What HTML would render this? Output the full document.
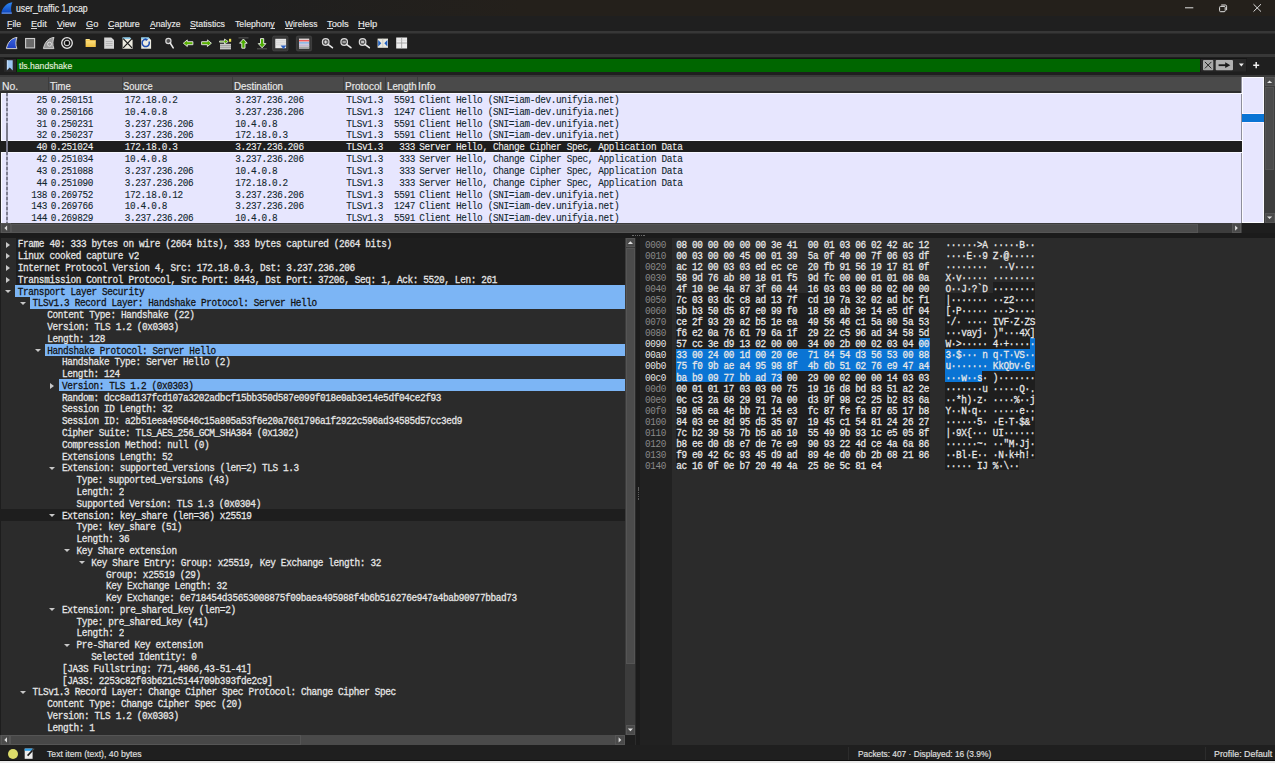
<!DOCTYPE html><html><head><meta charset="utf-8"><style>*{margin:0;padding:0;box-sizing:border-box}
html,body{width:1275px;height:763px;overflow:hidden;background:#2b2b2b}
body{position:relative;font-family:"Liberation Sans",sans-serif;}
div,span{position:absolute}
.sans{font-family:"Liberation Sans",sans-serif;font-size:9.3px;color:#e8e8e8;white-space:pre;line-height:12px}
.mono{font-family:"Liberation Mono",monospace}
#title{left:0;top:0;width:1275px;height:16.3px;background:#25211d}
#menu{left:0;top:16.3px;width:1275px;height:15.2px;background:#202020}
#sep1{left:0;top:31.5px;width:1275px;height:2px;background:#383838}
#toolbar{left:0;top:33.5px;width:1275px;height:20.5px;background:#202020}
#sep2{left:0;top:54px;width:1275px;height:2.5px;background:#393939}
#fbar{left:0;top:56.5px;width:1275px;height:18px;background:#202020}
#sep3{left:0;top:74.5px;width:1275px;height:2px;background:#3c3c3c}
#plhdr{left:0;top:76.6px;width:1241.5px;height:16px;background:#4a4a4a}
#plbody{left:0;top:92.6px;width:1241.5px;height:130.4px;background:#e7e6fe}
.prow{-webkit-text-stroke:0.1px currentColor;left:0;width:1241.5px;font-family:"Liberation Mono",monospace;font-size:9.4px;letter-spacing:-0.36px;color:#12272e;white-space:pre}
.prow .c{top:0;line-height:11.82px;transform:scaleY(1.12);transform-origin:0 8.2px}
.prow.sel{background:#1e1e1e;color:#f0f0f0}
.tbg{left:0;width:625px}
.tbg.top{background:#1e1e1e;left:15.5px;width:609.5px}
.tbg.dk{background:#1e1e1e}
.tbg.hl{background:#7cb5f5}
.tt{color:#e2e2e2;transform:scaleY(1.12);transform-origin:0 8.4px;-webkit-text-stroke:0.25px currentColor;font-family:"Liberation Mono",monospace;font-size:9.4px;letter-spacing:-0.36px;color:#e6e6e6;white-space:pre;line-height:11.79px}
.tt.hlt{color:#111}
.arr{width:0;height:0}
.ac{border-left:4px solid #c8c8c8;border-top:3px solid transparent;border-bottom:3px solid transparent}
.ao{border-top:3.6px solid #c8c8c8;border-left:3.2px solid transparent;border-right:3.2px solid transparent}
.hbg.tls{background:#1e1e1e}
.hbg.hsel{background:#0a74d4}
.ho{transform:scaleY(1.12);transform-origin:0 8.1px;font-family:"Liberation Mono",monospace;font-size:9.4px;letter-spacing:-0.36px;color:#8a8a8a;white-space:pre;line-height:11.07px}
.ht{transform:scaleY(1.12);transform-origin:0 8.1px;-webkit-text-stroke:0.25px currentColor;font-family:"Liberation Mono",monospace;font-size:9.4px;letter-spacing:-0.36px;color:#e8e8e8;white-space:pre;line-height:11.07px}
.lb{-webkit-text-stroke:0.15px currentColor;font-family:"Liberation Sans",sans-serif;line-height:1;white-space:pre;transform-origin:0 0}
</style></head><body><div style="left:0;top:0;width:1275px;height:16.3px;background:linear-gradient(90deg,#1f1f1f 0px,#1f1f1f 250px,#24201b 520px,#24201b 1275px)"></div><div class="lb" style="left:15.64px;top:3.57px;font-size:10.2px;color:#ececec;transform:scaleX(0.8567);">user_traffic 1.pcap</div><div style="left:0;top:16.3px;width:1275px;height:15.2px;background:#1f1f1f"></div><div class="lb" style="left:6.78px;top:19.93px;font-size:9.3px;color:#e8e8e8;transform:scaleX(0.9479);">File</div><div style="left:7.08px;top:28.3px;width:5.08px;height:0.9px;background:#d8d8d8"></div><div class="lb" style="left:30.55px;top:19.93px;font-size:9.3px;color:#e8e8e8;transform:scaleX(0.9805);">Edit</div><div style="left:30.85px;top:28.3px;width:5.78px;height:0.9px;background:#d8d8d8"></div><div class="lb" style="left:56.96px;top:19.93px;font-size:9.3px;color:#e8e8e8;transform:scaleX(0.9511);">View</div><div style="left:57.26px;top:28.3px;width:5.60px;height:0.9px;background:#d8d8d8"></div><div class="lb" style="left:85.94px;top:19.93px;font-size:9.3px;color:#e8e8e8;transform:scaleX(0.9956);">Go</div><div style="left:86.24px;top:28.3px;width:6.90px;height:0.9px;background:#d8d8d8"></div><div class="lb" style="left:107.85px;top:19.93px;font-size:9.3px;color:#e8e8e8;transform:scaleX(0.9623);">Capture</div><div style="left:108.15px;top:28.3px;width:6.16px;height:0.9px;background:#d8d8d8"></div><div class="lb" style="left:149.78px;top:19.93px;font-size:9.3px;color:#e8e8e8;transform:scaleX(0.9216);">Analyze</div><div style="left:150.08px;top:28.3px;width:5.42px;height:0.9px;background:#d8d8d8"></div><div class="lb" style="left:189.80px;top:19.93px;font-size:9.3px;color:#e8e8e8;transform:scaleX(0.9409);">Statistics</div><div style="left:190.10px;top:28.3px;width:5.54px;height:0.9px;background:#d8d8d8"></div><div class="lb" style="left:235.01px;top:19.93px;font-size:9.3px;color:#e8e8e8;transform:scaleX(0.9364);">Telephony</div><div style="left:270.66px;top:28.3px;width:4.05px;height:0.9px;background:#d8d8d8"></div><div class="lb" style="left:284.87px;top:19.93px;font-size:9.3px;color:#e8e8e8;transform:scaleX(0.9098);">Wireless</div><div style="left:285.17px;top:28.3px;width:7.69px;height:0.9px;background:#d8d8d8"></div><div class="lb" style="left:326.90px;top:19.93px;font-size:9.3px;color:#e8e8e8;transform:scaleX(1.0016);">Tools</div><div style="left:327.20px;top:28.3px;width:5.39px;height:0.9px;background:#d8d8d8"></div><div class="lb" style="left:357.93px;top:19.93px;font-size:9.3px;color:#e8e8e8;transform:scaleX(1.0074);">Help</div><div style="left:358.23px;top:28.3px;width:6.47px;height:0.9px;background:#d8d8d8"></div><div style="left:0;top:31.3px;width:1275px;height:2.2px;background:#373737"></div><div style="left:0;top:33.5px;width:1275px;height:20.5px;background:#1f1f1f"></div><div style="left:0;top:54px;width:1275px;height:2.5px;background:#383838"></div><div style="left:0;top:56.5px;width:1275px;height:18.5px;background:#1f1f1f"></div><div style="left:3.5px;top:58.1px;width:1243.5px;height:14.2px;background:#141414;border-radius:1px"></div><div style="left:4.4px;top:58.8px;width:11.6px;height:13px;background:#282828"></div><div style="left:16.9px;top:58.8px;width:1183.3px;height:13.2px;background:#006600"></div><div class="lb" style="left:19.16px;top:62.03px;font-size:9.3px;color:#e2eedf;transform:scaleX(0.9274);">tls.handshake</div><div style="left:0;top:74.6px;width:1275px;height:2px;background:#3a3a3a"></div><div style="left:0;top:76.6px;width:1241.5px;height:15.2px;background:#4a4a4a"></div><div style="left:0;top:91.3px;width:1241.5px;height:1.5px;background:#2e2e2e"></div><div style="left:47.7px;top:77px;width:1px;height:14.5px;background:#3c3c3c"></div><div style="left:121.5px;top:77px;width:1px;height:14.5px;background:#3c3c3c"></div><div style="left:231.5px;top:77px;width:1px;height:14.5px;background:#3c3c3c"></div><div style="left:342.6px;top:77px;width:1px;height:14.5px;background:#3c3c3c"></div><div style="left:384.6px;top:77px;width:1px;height:14.5px;background:#3c3c3c"></div><div style="left:417.2px;top:77px;width:1px;height:14.5px;background:#3c3c3c"></div><div class="lb" style="left:1.65px;top:81.31px;font-size:10.5px;color:#eaeaea;transform:scaleX(0.9924);">No.</div><div class="lb" style="left:49.99px;top:81.31px;font-size:10.5px;color:#eaeaea;transform:scaleX(0.9038);">Time</div><div class="lb" style="left:123.17px;top:81.31px;font-size:10.5px;color:#eaeaea;transform:scaleX(0.8911);">Source</div><div class="lb" style="left:233.90px;top:81.31px;font-size:10.5px;color:#eaeaea;transform:scaleX(0.9336);">Destination</div><div class="lb" style="left:344.88px;top:81.31px;font-size:10.5px;color:#eaeaea;transform:scaleX(0.9524);">Protocol</div><div class="lb" style="left:387.01px;top:81.31px;font-size:10.5px;color:#eaeaea;transform:scaleX(0.9223);">Length</div><div class="lb" style="left:418.13px;top:81.31px;font-size:10.5px;color:#eaeaea;transform:scaleX(0.9996);">Info</div><div style="left:0;top:745px;width:1275px;height:15px;background:#1f1f1f"></div><div style="left:0;top:760px;width:1275px;height:1.4px;background:#0c0c0c"></div><div style="left:0;top:761.4px;width:1275px;height:1.6px;background:#ebebeb"></div><div class="lb" style="left:46.81px;top:750.33px;font-size:9.3px;color:#e0e0e0;transform:scaleX(0.9349);">Text item (text), 40 bytes</div><div class="lb" style="left:857.92px;top:750.33px;font-size:9.3px;color:#e0e0e0;transform:scaleX(0.8979);">Packets: 407 · Displayed: 16 (3.9%)</div><div class="lb" style="left:1213.97px;top:750.33px;font-size:9.3px;color:#e0e0e0;transform:scaleX(0.9542);">Profile: Default</div><div style="left:848px;top:747px;width:1px;height:13px;background:#2c2c2c"></div><div style="left:1204.5px;top:747px;width:1px;height:13px;background:#2c2c2c"></div><div style="left:7.5px;top:748.8px;width:10.1px;height:10px;border-radius:50%;background:#dcdc6a"></div><svg style="position:absolute;left:0;top:740px" width="60" height="23"><rect x="24.7" y="8.6" width="7.9" height="10.2" fill="#ececec"/><rect x="24.7" y="8.6" width="7.9" height="2.2" fill="#2c9ee8"/><path d="M27.6 15.6 L33.6 9.3" stroke="#1a1a1a" stroke-width="1.6"/><path d="M32.2 10.6 L34.2 8.6" stroke="#555" stroke-width="1.2"/></svg><svg style="position:absolute;left:0;top:0" width="1275" height="80"><defs><linearGradient id="gfin" x1="0" y1="0" x2="0" y2="1"><stop offset="0" stop-color="#3a64e0"/><stop offset="1" stop-color="#1f3fc0"/></linearGradient><linearGradient id="gfold" x1="0" y1="0" x2="0" y2="1"><stop offset="0" stop-color="#ffe890"/><stop offset="1" stop-color="#f0c040"/></linearGradient><linearGradient id="gtfin" x1="0" y1="0" x2="0" y2="1"><stop offset="0" stop-color="#2f8af5"/><stop offset="1" stop-color="#0a3fb8"/></linearGradient></defs><path d="M1.2 13.7 C2.3 8 5.8 3.2 12.4 2.3 C10.9 5.5 10.6 10 11.9 13.7 Z" fill="url(#gtfin)"/><path d="M1.8 13.1 L11.8 13.1" stroke="#80a8e8" stroke-width="1"/><path d="M1185 7.8 H1193.3" stroke="#e0e0e0" stroke-width="1"/><rect x="1219.6" y="6.4" width="5.6" height="5.3" rx="1" fill="none" stroke="#e0e0e0" stroke-width="1"/><path d="M1221.2 5 H1225.3 Q1226.6 5 1226.6 6.3 V10.2" fill="none" stroke="#e0e0e0" stroke-width="1"/><path d="M1253.5 4.2 L1261 11.6 M1261 4.2 L1253.5 11.6" stroke="#e0e0e0" stroke-width="1"/><path d="M6.4 48.6 C7.8 42 11 38.3 17 37.4 C15.6 40.6 15.4 45 16.9 48.6 Z" fill="url(#gfin)" stroke="#cfcfcf" stroke-width="1"/><rect x="25.6" y="38.5" width="9" height="9.4" fill="#6a6a6a" stroke="#cdcdcd" stroke-width="1.1"/><path d="M43.4 48.6 C44.8 42 48 38.3 54 37.4 C52.6 40.6 52.4 45 53.9 48.6 Z" fill="#9a9a9a" stroke="#cfcfcf" stroke-width="1"/><circle cx="49.5" cy="44.2" r="2" fill="none" stroke="#e0e0e0" stroke-width="0.9"/><circle cx="67" cy="43" r="5.3" fill="none" stroke="#e6e6e6" stroke-width="1.3"/><circle cx="67" cy="43" r="2.8" fill="#222" stroke="#e0e0e0" stroke-width="1"/><circle cx="67" cy="43" r="1.1" fill="#000"/><path d="M85.6 39 H89.4 L90.4 40.2 H95.8 V47 H85.6 Z" fill="url(#gfold)"/><path d="M85.6 40.6 H95.8" stroke="#f5b830" stroke-width="0.6"/><path d="M104.2 37.4 H111.3 L114 40.1 V48.7 H104.2 Z" fill="#d6d6d6"/><path d="M105.8 41.5 H112.5 M105.8 43.5 H112.5 M105.8 45.5 H112.5" stroke="#a8a8a8" stroke-width="0.7"/><path d="M122.6 37.4 H130 L132.6 40 V48.7 H122.6 Z" fill="#ecebe0"/><path d="M122.6 37.4 H130 L131.3 38.8 H122.6 Z" fill="#6cc0f0"/><path d="M123.2 38.6 L132 47.8 M132 38.6 L123.2 47.8" stroke="#1a1a1a" stroke-width="1.2"/><path d="M141.2 37.4 H148.6 L151.1 40 V48.7 H141.2 Z" fill="#ecebe0"/><path d="M141.2 37.4 H148.6 L149.8 38.8 H141.2 Z" fill="#6cc0f0"/><path d="M149 41.5 A3.6 3.6 0 1 1 146.2 39.4" fill="none" stroke="#1f4fb0" stroke-width="1.5"/><path d="M145.4 38.2 L148.2 39.5 L145.8 41.3 Z" fill="#1f4fb0"/><circle cx="168.4" cy="41" r="2.6" fill="#555" stroke="#d8d8d8" stroke-width="1.2"/><path d="M170.2 43 L173.2 47.8" stroke="#e8e8e8" stroke-width="1.6" stroke-linecap="round"/><path d="M183.3 43.2 L187.3 39.9 V41.7 H192.9 V44.7 H187.3 V46.5 Z" fill="#58b000" stroke="#e8e8e8" stroke-width="0.9" stroke-linejoin="round"/><path d="M211.4 43.2 L207.4 39.9 V41.7 H201.6 V44.7 H207.4 V46.5 Z" fill="#58b000" stroke="#e8e8e8" stroke-width="0.9" stroke-linejoin="round"/><rect x="220" y="43.8" width="11" height="5.6" fill="#c8c8c8"/><path d="M220 45.5 H231 M220 47.4 H231" stroke="#8a8a8a" stroke-width="0.6"/><rect x="229" y="38.8" width="2.2" height="3" fill="#e8e050"/><path d="M219.6 41 H224.5 V39 L228.2 41.5 L224.5 44 V42.2 H219.6 Z" fill="#58b000" stroke="#e8e8e8" stroke-width="0.8" stroke-linejoin="round"/><path d="M238.5 37.9 H248.5" stroke="#6a6a6a" stroke-width="0.8"/><path d="M243.4 39 L247.2 43.2 H245 V48.2 H241.8 V43.2 H239.6 Z" fill="#4cad00" stroke="#f0f0f0" stroke-width="0.9" stroke-linejoin="round"/><path d="M257 48.8 H267" stroke="#6a6a6a" stroke-width="0.8"/><path d="M262.1 47.8 L265.9 43.6 H263.7 V38.6 H260.5 V43.6 H258.3 Z" fill="#4cad00" stroke="#f0f0f0" stroke-width="0.9" stroke-linejoin="round"/><rect x="272.6" y="36.1" width="15.4" height="14.8" rx="1.5" fill="#363636" stroke="#454545" stroke-width="0.8"/><rect x="275.3" y="38.8" width="10.8" height="9.4" fill="#e8e8e8"/><path d="M275.3 40.8 H286.1 M275.3 42.8 H286.1 M275.3 44.8 H286.1" stroke="#c4c4c4" stroke-width="0.6"/><path d="M280.6 45.4 H286.4 L283.5 49 Z" fill="#2a5fc0"/><rect x="296.4" y="36.1" width="15.2" height="14.8" rx="1.5" fill="#363636" stroke="#454545" stroke-width="0.8"/><rect x="299" y="38.6" width="10.2" height="10" fill="#e0e0e0"/><rect x="299" y="39.9" width="10.2" height="1.5" fill="#f05a5a"/><rect x="299" y="42.2" width="10.2" height="1.4" fill="#7eb0e8"/><rect x="299" y="44.4" width="10.2" height="1.8" fill="#c4b8d4"/><rect x="299" y="46.6" width="10.2" height="2" fill="#a8a8a8"/><circle cx="325.7" cy="42.0" r="3.3" fill="#505050" stroke="#d8d8d8" stroke-width="1.2"/><path d="M328.0 44.4 L332.40000000000003 47.7" stroke="#e8e8e8" stroke-width="1.6" stroke-linecap="round"/><path d="M324.09999999999997 42.0 H327.3 M325.7 40.4 V43.6" stroke="#f0f0f0" stroke-width="0.9"/><circle cx="344.2" cy="42.0" r="3.3" fill="#505050" stroke="#d8d8d8" stroke-width="1.2"/><path d="M346.5 44.4 L350.90000000000003 47.7" stroke="#e8e8e8" stroke-width="1.6" stroke-linecap="round"/><path d="M342.59999999999997 42.0 H345.8" stroke="#f0f0f0" stroke-width="1"/><circle cx="362.59999999999997" cy="42.0" r="3.3" fill="#505050" stroke="#d8d8d8" stroke-width="1.2"/><path d="M364.9 44.4 L369.3 47.7" stroke="#e8e8e8" stroke-width="1.6" stroke-linecap="round"/><rect x="361.09999999999997" y="40.8" width="3" height="2.4" fill="#c0c0c0"/><rect x="377.6" y="38.6" width="10.4" height="9.2" fill="#e8e8e0"/><path d="M382.8 38.6 V47.8" stroke="#b8b8b0" stroke-width="0.6"/><path d="M378.2 40 L381.3 43.2 L378.2 46.4 Z M387.4 40 L384.3 43.2 L387.4 46.4 Z" fill="#2060c0"/><rect x="396.2" y="37.5" width="10.9" height="11" fill="#ececec"/><path d="M396.2 43 H407.1 M401.65 37.5 V48.5" stroke="#9a9a9a" stroke-width="0.8"/><path d="M396.2 40.2 H407.1" stroke="#c8c8c8" stroke-width="0.5"/><path d="M6.8 60.2 H12.7 V70.5 L9.75 67.6 L6.8 70.5 Z" fill="#9cc6f2"/><path d="M7.6 60.2 V69" stroke="#cfe4fa" stroke-width="0.8"/><rect x="1200.6" y="58.9" width="45.8" height="12.9" fill="#292929"/><rect x="1203" y="60" width="10.3" height="10.3" rx="1" fill="#a9a9a9"/><path d="M1204.9 61.9 L1211.4 68.4 M1211.4 61.9 L1204.9 68.4" stroke="#262626" stroke-width="1"/><rect x="1215.7" y="60" width="17.3" height="10.3" rx="1" fill="#b1b1b1"/><path d="M1218.6 65.2 H1226.5" stroke="#1c1c1c" stroke-width="1.8"/><path d="M1225.2 62.3 L1230.3 65.2 L1225.2 68.1 Z" fill="#1c1c1c"/><path d="M1238.9 63.6 H1243.8 L1241.35 66.5 Z" fill="#f0f0f0"/><path d="M1253.2 65.2 H1259.2 M1256.2 62.1 V68.3" stroke="#f0f0f0" stroke-width="1.5"/></svg><div style="left:0;top:92.6px;width:1241.5px;height:130.4px;background:#e7e6fe"></div><div style="left:0;top:92.6px;width:1px;height:130.4px;background:#2a2a2a"></div><div style="left:1px;top:92.6px;width:1px;height:130.4px;background:#fafaff"></div><div style="left:1241.3px;top:76.8px;width:1px;height:146.2px;background:#8e8e9c"></div><div style="left:1242.3px;top:77.3px;width:21.8px;height:145.7px;background:#fbfbff"></div><div style="left:1243.3px;top:78.3px;width:19.8px;height:143.7px;background:#e7e6fe"></div><div style="left:1242.3px;top:112.8px;width:21.8px;height:10.6px;background:#fdf3ff"></div><div style="left:1242.3px;top:113.7px;width:21.8px;height:8.8px;background:#0a74d4"></div><div style="left:1264.2px;top:76.8px;width:10.8px;height:146.2px;background:#3d3d3d"></div><div style="left:1265px;top:87px;width:9.2px;height:83px;background:#4b4b4b;border:0.8px solid #555"></div><div style="left:1264.60px;top:77.30px;width:10.00px;height:9.00px;background:#4a4a4a;border:0.8px solid #565656"></div><svg style="position:absolute;left:0;top:0;overflow:visible" width="1" height="1"><polygon points="1267.0,83.1 1272.1999999999998,83.1 1269.6,80.39999999999999" fill="#e0e0e0"/></svg><div style="left:1264.60px;top:212.60px;width:10.00px;height:10.20px;background:#4a4a4a;border:0.8px solid #565656"></div><svg style="position:absolute;left:0;top:0;overflow:visible" width="1" height="1"><polygon points="1267.0,216.39999999999998 1272.1999999999998,216.39999999999998 1269.6,219.1" fill="#e0e0e0"/></svg><div style="left:0;top:223px;width:1275px;height:10.2px;background:#1e1e1e"></div><div style="left:0;top:223px;width:1241.5px;height:10px;background:#3c3c3c"></div><div style="left:10.6px;top:223.5px;width:1187.5px;height:9px;background:#4c4c4c;border:0.8px solid #555"></div><div style="left:1.00px;top:223.40px;width:9.60px;height:9.40px;background:#4a4a4a;border:0.8px solid #565656"></div><svg style="position:absolute;left:0;top:0;overflow:visible" width="1" height="1"><polygon points="7.1,225.5 7.1,230.7 4.4,228.1" fill="#e0e0e0"/></svg><div style="left:1231.60px;top:223.40px;width:9.60px;height:9.40px;background:#4a4a4a;border:0.8px solid #565656"></div><svg style="position:absolute;left:0;top:0;overflow:visible" width="1" height="1"><polygon points="1235.1,225.5 1235.1,230.7 1237.8,228.1" fill="#e0e0e0"/></svg><div style="left:0;top:232.6px;width:1241.5px;height:0.8px;background:#333"></div><div style="left:0;top:233.2px;width:1275px;height:4.6px;background:#1b1b1b"></div><div style="left:632.30px;top:235px;width:1.3px;height:1.3px;background:#6a6a6a"></div><div style="left:634.50px;top:235px;width:1.3px;height:1.3px;background:#6a6a6a"></div><div style="left:636.70px;top:235px;width:1.3px;height:1.3px;background:#6a6a6a"></div><div style="left:638.90px;top:235px;width:1.3px;height:1.3px;background:#6a6a6a"></div><div style="left:641.10px;top:235px;width:1.3px;height:1.3px;background:#6a6a6a"></div><div style="left:643.30px;top:235px;width:1.3px;height:1.3px;background:#6a6a6a"></div><div style="left:0;top:237.8px;width:625px;height:497.2px;background:#2b2b2b"></div><div style="left:0;top:237.8px;width:1px;height:497.2px;background:#1d1d1d"></div><div style="left:625.2px;top:237.8px;width:10.3px;height:497.2px;background:#3c3c3c"></div><div style="left:625.6px;top:247.6px;width:9.6px;height:416.4px;background:#4b4b4b;border:0.8px solid #555"></div><div style="left:625.50px;top:238.00px;width:9.80px;height:9.40px;background:#4a4a4a;border:0.8px solid #565656"></div><svg style="position:absolute;left:0;top:0;overflow:visible" width="1" height="1"><polygon points="627.8,244.0 633.0,244.0 630.4,241.29999999999998" fill="#e0e0e0"/></svg><div style="left:625.50px;top:725.20px;width:9.80px;height:9.40px;background:#4a4a4a;border:0.8px solid #565656"></div><svg style="position:absolute;left:0;top:0;overflow:visible" width="1" height="1"><polygon points="627.8,728.6000000000001 633.0,728.6000000000001 630.4,731.3000000000001" fill="#e0e0e0"/></svg><div style="left:0;top:734.8px;width:625.2px;height:10.2px;background:#4a4a4a"></div><div style="left:10px;top:735.2px;width:291px;height:9.4px;background:#474747;border:0.8px solid #555"></div><div style="left:1.00px;top:735.20px;width:9.40px;height:9.40px;background:#4a4a4a;border:0.8px solid #565656"></div><svg style="position:absolute;left:0;top:0;overflow:visible" width="1" height="1"><polygon points="7.0,737.3000000000001 7.0,742.5000000000001 4.300000000000001,739.9000000000001" fill="#e0e0e0"/></svg><div style="left:615.00px;top:735.20px;width:9.80px;height:9.40px;background:#4a4a4a;border:0.8px solid #565656"></div><svg style="position:absolute;left:0;top:0;overflow:visible" width="1" height="1"><polygon points="618.6,737.3000000000001 618.6,742.5000000000001 621.3,739.9000000000001" fill="#e0e0e0"/></svg><div style="left:625.2px;top:734.8px;width:10.3px;height:10.2px;background:#1e1e1e"></div><div style="left:635.5px;top:237.8px;width:4.5px;height:507.2px;background:#1c1c1c"></div><div style="left:640px;top:237.8px;width:635px;height:507.2px;background:#2b2b2b"></div><div style="left:640px;top:237.8px;width:31.5px;height:507.2px;background:#212121"></div><div style="left:637.6px;top:487.20px;width:1.4px;height:1.4px;background:#5e5e5e"></div><div style="left:637.6px;top:489.40px;width:1.4px;height:1.4px;background:#5e5e5e"></div><div style="left:637.6px;top:491.60px;width:1.4px;height:1.4px;background:#5e5e5e"></div><div style="left:637.6px;top:493.80px;width:1.4px;height:1.4px;background:#5e5e5e"></div><div style="left:637.6px;top:496.00px;width:1.4px;height:1.4px;background:#5e5e5e"></div><div style="left:637.6px;top:498.20px;width:1.4px;height:1.4px;background:#5e5e5e"></div><div class="prow" style="top:93.00px;height:11.82px"><div style="left:0;top:2.0px;width:1241.5px;height:11.82px"><span class="c" style="right:1194.50px;text-align:right">25</span><span class="c" style="left:50.8px">0.250151</span><span class="c" style="left:124.8px">172.18.0.2</span><span class="c" style="left:235.2px">3.237.236.206</span><span class="c" style="left:346.2px">TLSv1.3</span><span class="c" style="right:826.50px;text-align:right">5591</span><span class="c" style="left:419.2px">Client Hello (SNI=iam-dev.unifyia.net)</span></div></div><div class="prow" style="top:104.82px;height:11.82px"><div style="left:0;top:2.0px;width:1241.5px;height:11.82px"><span class="c" style="right:1194.50px;text-align:right">30</span><span class="c" style="left:50.8px">0.250166</span><span class="c" style="left:124.8px">10.4.0.8</span><span class="c" style="left:235.2px">3.237.236.206</span><span class="c" style="left:346.2px">TLSv1.3</span><span class="c" style="right:826.50px;text-align:right">1247</span><span class="c" style="left:419.2px">Client Hello (SNI=iam-dev.unifyia.net)</span></div></div><div class="prow" style="top:116.64px;height:11.82px"><div style="left:0;top:2.0px;width:1241.5px;height:11.82px"><span class="c" style="right:1194.50px;text-align:right">31</span><span class="c" style="left:50.8px">0.250231</span><span class="c" style="left:124.8px">3.237.236.206</span><span class="c" style="left:235.2px">10.4.0.8</span><span class="c" style="left:346.2px">TLSv1.3</span><span class="c" style="right:826.50px;text-align:right">5591</span><span class="c" style="left:419.2px">Client Hello (SNI=iam-dev.unifyia.net)</span></div></div><div class="prow" style="top:128.46px;height:11.82px"><div style="left:0;top:2.0px;width:1241.5px;height:11.82px"><span class="c" style="right:1194.50px;text-align:right">32</span><span class="c" style="left:50.8px">0.250237</span><span class="c" style="left:124.8px">3.237.236.206</span><span class="c" style="left:235.2px">172.18.0.3</span><span class="c" style="left:346.2px">TLSv1.3</span><span class="c" style="right:826.50px;text-align:right">5591</span><span class="c" style="left:419.2px">Client Hello (SNI=iam-dev.unifyia.net)</span></div></div><div class="prow sel" style="top:140.28px;height:11.82px"><div style="left:0;top:2.0px;width:1241.5px;height:11.82px"><span class="c" style="right:1194.50px;text-align:right">40</span><span class="c" style="left:50.8px">0.251024</span><span class="c" style="left:124.8px">172.18.0.3</span><span class="c" style="left:235.2px">3.237.236.206</span><span class="c" style="left:346.2px">TLSv1.3</span><span class="c" style="right:826.50px;text-align:right">333</span><span class="c" style="left:419.2px">Server Hello, Change Cipher Spec, Application Data</span></div></div><div class="prow" style="top:152.10px;height:11.82px"><div style="left:0;top:2.0px;width:1241.5px;height:11.82px"><span class="c" style="right:1194.50px;text-align:right">42</span><span class="c" style="left:50.8px">0.251034</span><span class="c" style="left:124.8px">10.4.0.8</span><span class="c" style="left:235.2px">3.237.236.206</span><span class="c" style="left:346.2px">TLSv1.3</span><span class="c" style="right:826.50px;text-align:right">333</span><span class="c" style="left:419.2px">Server Hello, Change Cipher Spec, Application Data</span></div></div><div class="prow" style="top:163.92px;height:11.82px"><div style="left:0;top:2.0px;width:1241.5px;height:11.82px"><span class="c" style="right:1194.50px;text-align:right">43</span><span class="c" style="left:50.8px">0.251088</span><span class="c" style="left:124.8px">3.237.236.206</span><span class="c" style="left:235.2px">10.4.0.8</span><span class="c" style="left:346.2px">TLSv1.3</span><span class="c" style="right:826.50px;text-align:right">333</span><span class="c" style="left:419.2px">Server Hello, Change Cipher Spec, Application Data</span></div></div><div class="prow" style="top:175.74px;height:11.82px"><div style="left:0;top:2.0px;width:1241.5px;height:11.82px"><span class="c" style="right:1194.50px;text-align:right">44</span><span class="c" style="left:50.8px">0.251090</span><span class="c" style="left:124.8px">3.237.236.206</span><span class="c" style="left:235.2px">172.18.0.2</span><span class="c" style="left:346.2px">TLSv1.3</span><span class="c" style="right:826.50px;text-align:right">333</span><span class="c" style="left:419.2px">Server Hello, Change Cipher Spec, Application Data</span></div></div><div class="prow" style="top:187.56px;height:11.82px"><div style="left:0;top:2.0px;width:1241.5px;height:11.82px"><span class="c" style="right:1194.50px;text-align:right">138</span><span class="c" style="left:50.8px">0.269752</span><span class="c" style="left:124.8px">172.18.0.12</span><span class="c" style="left:235.2px">3.237.236.206</span><span class="c" style="left:346.2px">TLSv1.3</span><span class="c" style="right:826.50px;text-align:right">5591</span><span class="c" style="left:419.2px">Client Hello (SNI=iam-dev.unifyia.net)</span></div></div><div class="prow" style="top:199.38px;height:11.82px"><div style="left:0;top:2.0px;width:1241.5px;height:11.82px"><span class="c" style="right:1194.50px;text-align:right">143</span><span class="c" style="left:50.8px">0.269766</span><span class="c" style="left:124.8px">10.4.0.8</span><span class="c" style="left:235.2px">3.237.236.206</span><span class="c" style="left:346.2px">TLSv1.3</span><span class="c" style="right:826.50px;text-align:right">1247</span><span class="c" style="left:419.2px">Client Hello (SNI=iam-dev.unifyia.net)</span></div></div><div class="prow" style="top:211.20px;height:11.82px"><div style="left:0;top:2.0px;width:1241.5px;height:11.82px"><span class="c" style="right:1194.50px;text-align:right">144</span><span class="c" style="left:50.8px">0.269829</span><span class="c" style="left:124.8px">3.237.236.206</span><span class="c" style="left:235.2px">10.4.0.8</span><span class="c" style="left:346.2px">TLSv1.3</span><span class="c" style="right:826.50px;text-align:right">5591</span><span class="c" style="left:419.2px">Client Hello (SNI=iam-dev.unifyia.net)</span></div></div><div style="left:1px;top:92.9px;width:1240.5px;height:1.1px;background:#f8f8ff"></div><div style="left:1px;top:139.5px;width:1240.5px;height:1.1px;background:#f6f6ff"></div><div style="left:1px;top:152.1px;width:1240.5px;height:1.1px;background:#f6f6ff"></div><div style="left:6.1px;top:93.2px;width:1.9px;height:47.2px;background:repeating-linear-gradient(180deg,#7c7c90 0px,#7c7c90 3.2px,#b8b8cc 3.2px,#b8b8cc 5px)"></div><div style="left:6.1px;top:125.6px;width:1.9px;height:26.6px;background:#7a7a8c"></div><div style="left:6.1px;top:152.2px;width:1.9px;height:70.8px;background:repeating-linear-gradient(180deg,#7c7c90 0px,#7c7c90 3.2px,#b8b8cc 3.2px,#b8b8cc 5px)"></div><div class="tbg top" style="top:238.00px;height:11.84px"></div><div class="arr ac" style="left:6.20px;top:241.50px"></div><div class="tt" style="left:17.80px;top:239.40px">Frame 40: 333 bytes on wire (2664 bits), 333 bytes captured (2664 bits)</div><div class="tbg top" style="top:249.79px;height:11.84px"></div><div class="arr ac" style="left:6.20px;top:253.28px"></div><div class="tt" style="left:17.80px;top:251.19px">Linux cooked capture v2</div><div class="tbg top" style="top:261.58px;height:11.84px"></div><div class="arr ac" style="left:6.20px;top:265.07px"></div><div class="tt" style="left:17.80px;top:262.98px">Internet Protocol Version 4, Src: 172.18.0.3, Dst: 3.237.236.206</div><div class="tbg top" style="top:273.37px;height:11.84px"></div><div class="arr ac" style="left:6.20px;top:276.87px"></div><div class="tt" style="left:17.80px;top:274.77px">Transmission Control Protocol, Src Port: 8443, Dst Port: 37206, Seq: 1, Ack: 5520, Len: 261</div><div class="tbg hl" style="top:285.16px;height:11.84px;left:15.30px;width:609.70px"></div><div class="arr ao" style="left:5.20px;top:289.85px"></div><div class="tt hlt" style="left:17.80px;top:286.56px">Transport Layer Security</div><div class="tbg hl" style="top:296.95px;height:11.84px;left:30.00px;width:595.00px"></div><div class="arr ao" style="left:19.90px;top:301.64px"></div><div class="tt hlt" style="left:32.50px;top:298.35px">TLSv1.3 Record Layer: Handshake Protocol: Server Hello</div><div class="tt" style="left:47.20px;top:310.14px">Content Type: Handshake (22)</div><div class="tt" style="left:47.20px;top:321.93px">Version: TLS 1.2 (0x0303)</div><div class="tt" style="left:47.20px;top:333.72px">Length: 128</div><div class="tbg hl" style="top:344.11px;height:11.84px;left:44.70px;width:580.30px"></div><div class="arr ao" style="left:34.60px;top:348.81px"></div><div class="tt hlt" style="left:47.20px;top:345.51px">Handshake Protocol: Server Hello</div><div class="tt" style="left:61.90px;top:357.30px">Handshake Type: Server Hello (2)</div><div class="tt" style="left:61.90px;top:369.09px">Length: 124</div><div class="tbg hl" style="top:379.48px;height:11.84px;left:59.40px;width:565.60px"></div><div class="arr ac" style="left:50.30px;top:382.98px"></div><div class="tt hlt" style="left:61.90px;top:380.88px">Version: TLS 1.2 (0x0303)</div><div class="tt" style="left:61.90px;top:392.67px">Random: dcc8ad137fcd107a3202adbcf15bb350d587e099f018e0ab3e14e5df04ce2f93</div><div class="tt" style="left:61.90px;top:404.46px">Session ID Length: 32</div><div class="tt" style="left:61.90px;top:416.25px">Session ID: a2b51eea495646c15a805a53f6e20a7661796a1f2922c596ad34585d57cc3ed9</div><div class="tt" style="left:61.90px;top:428.04px">Cipher Suite: TLS_AES_256_GCM_SHA384 (0x1302)</div><div class="tt" style="left:61.90px;top:439.83px">Compression Method: null (0)</div><div class="tt" style="left:61.90px;top:451.62px">Extensions Length: 52</div><div class="arr ao" style="left:49.30px;top:466.70px"></div><div class="tt" style="left:61.90px;top:463.41px">Extension: supported_versions (len=2) TLS 1.3</div><div class="tt" style="left:76.60px;top:475.20px">Type: supported_versions (43)</div><div class="tt" style="left:76.60px;top:486.99px">Length: 2</div><div class="tt" style="left:76.60px;top:498.78px">Supported Version: TLS 1.3 (0x0304)</div><div class="tbg dk" style="top:509.17px;height:11.84px"></div><div class="arr ao" style="left:49.30px;top:513.86px"></div><div class="tt" style="left:61.90px;top:510.57px">Extension: key_share (len=36) x25519</div><div class="tt" style="left:76.60px;top:522.36px">Type: key_share (51)</div><div class="tt" style="left:76.60px;top:534.15px">Length: 36</div><div class="arr ao" style="left:64.00px;top:549.23px"></div><div class="tt" style="left:76.60px;top:545.94px">Key Share extension</div><div class="arr ao" style="left:78.70px;top:561.02px"></div><div class="tt" style="left:91.30px;top:557.73px">Key Share Entry: Group: x25519, Key Exchange length: 32</div><div class="tt" style="left:106.00px;top:569.52px">Group: x25519 (29)</div><div class="tt" style="left:106.00px;top:581.31px">Key Exchange Length: 32</div><div class="tt" style="left:106.00px;top:593.10px">Key Exchange: 6e718454d35653008875f09baea495988f4b6b516276e947a4bab90977bbad73</div><div class="arr ao" style="left:49.30px;top:608.18px"></div><div class="tt" style="left:61.90px;top:604.89px">Extension: pre_shared_key (len=2)</div><div class="tt" style="left:76.60px;top:616.68px">Type: pre_shared_key (41)</div><div class="tt" style="left:76.60px;top:628.47px">Length: 2</div><div class="arr ao" style="left:64.00px;top:643.55px"></div><div class="tt" style="left:76.60px;top:640.26px">Pre-Shared Key extension</div><div class="tt" style="left:91.30px;top:652.05px">Selected Identity: 0</div><div class="tt" style="left:61.90px;top:663.84px">[JA3S Fullstring: 771,4866,43-51-41]</div><div class="tt" style="left:61.90px;top:675.63px">[JA3S: 2253c82f03b621c5144709b393fde2c9]</div><div class="arr ao" style="left:19.90px;top:690.71px"></div><div class="tt" style="left:32.50px;top:687.42px">TLSv1.3 Record Layer: Change Cipher Spec Protocol: Change Cipher Spec</div><div class="tt" style="left:47.20px;top:699.21px">Content Type: Change Cipher Spec (20)</div><div class="tt" style="left:47.20px;top:711.00px">Version: TLS 1.2 (0x0303)</div><div class="tt" style="left:47.20px;top:722.79px">Length: 1</div><div class="hbg tls" style="left:808.20px;width:121.44px;top:282.18px;height:11.12px"></div><div class="hbg tls" style="left:993.00px;width:42.24px;top:282.18px;height:11.12px"></div><div class="hbg tls" style="left:675.80px;width:253.84px;top:293.25px;height:11.12px"></div><div class="hbg tls" style="left:945.48px;width:89.76px;top:293.25px;height:11.12px"></div><div class="hbg tls" style="left:675.80px;width:253.84px;top:304.32px;height:11.12px"></div><div class="hbg tls" style="left:945.48px;width:89.76px;top:304.32px;height:11.12px"></div><div class="hbg tls" style="left:675.80px;width:253.84px;top:315.39px;height:11.12px"></div><div class="hbg tls" style="left:945.48px;width:89.76px;top:315.39px;height:11.12px"></div><div class="hbg tls" style="left:675.80px;width:253.84px;top:326.46px;height:11.12px"></div><div class="hbg tls" style="left:945.48px;width:89.76px;top:326.46px;height:11.12px"></div><div class="hbg tls" style="left:675.80px;width:253.84px;top:337.53px;height:11.12px"></div><div class="hbg tls" style="left:945.48px;width:89.76px;top:337.53px;height:11.12px"></div><div class="hbg hsel" style="left:919.08px;width:10.56px;top:337.53px;height:11.12px"></div><div class="hbg hsel" style="left:1029.96px;width:5.28px;top:337.53px;height:11.12px"></div><div class="hbg tls" style="left:675.80px;width:253.84px;top:348.60px;height:11.12px"></div><div class="hbg tls" style="left:945.48px;width:89.76px;top:348.60px;height:11.12px"></div><div class="hbg hsel" style="left:675.80px;width:253.84px;top:348.60px;height:11.12px"></div><div class="hbg hsel" style="left:945.48px;width:89.76px;top:348.60px;height:11.12px"></div><div class="hbg tls" style="left:675.80px;width:253.84px;top:359.67px;height:11.12px"></div><div class="hbg tls" style="left:945.48px;width:89.76px;top:359.67px;height:11.12px"></div><div class="hbg hsel" style="left:675.80px;width:253.84px;top:359.67px;height:11.12px"></div><div class="hbg hsel" style="left:945.48px;width:89.76px;top:359.67px;height:11.12px"></div><div class="hbg tls" style="left:675.80px;width:253.84px;top:370.74px;height:11.12px"></div><div class="hbg tls" style="left:945.48px;width:89.76px;top:370.74px;height:11.12px"></div><div class="hbg hsel" style="left:675.80px;width:106.00px;top:370.74px;height:11.12px"></div><div class="hbg hsel" style="left:945.48px;width:36.96px;top:370.74px;height:11.12px"></div><div class="hbg tls" style="left:675.80px;width:253.84px;top:381.81px;height:11.12px"></div><div class="hbg tls" style="left:945.48px;width:89.76px;top:381.81px;height:11.12px"></div><div class="hbg tls" style="left:675.80px;width:253.84px;top:392.88px;height:11.12px"></div><div class="hbg tls" style="left:945.48px;width:89.76px;top:392.88px;height:11.12px"></div><div class="hbg tls" style="left:675.80px;width:253.84px;top:403.95px;height:11.12px"></div><div class="hbg tls" style="left:945.48px;width:89.76px;top:403.95px;height:11.12px"></div><div class="hbg tls" style="left:675.80px;width:253.84px;top:415.02px;height:11.12px"></div><div class="hbg tls" style="left:945.48px;width:89.76px;top:415.02px;height:11.12px"></div><div class="hbg tls" style="left:675.80px;width:253.84px;top:426.09px;height:11.12px"></div><div class="hbg tls" style="left:945.48px;width:89.76px;top:426.09px;height:11.12px"></div><div class="hbg tls" style="left:675.80px;width:253.84px;top:437.16px;height:11.12px"></div><div class="hbg tls" style="left:945.48px;width:89.76px;top:437.16px;height:11.12px"></div><div class="hbg tls" style="left:675.80px;width:253.84px;top:448.23px;height:11.12px"></div><div class="hbg tls" style="left:945.48px;width:89.76px;top:448.23px;height:11.12px"></div><div class="hbg tls" style="left:675.80px;width:206.32px;top:459.30px;height:11.12px"></div><div class="hbg tls" style="left:945.48px;width:73.92px;top:459.30px;height:11.12px"></div><div class="ho" style="left:645.00px;top:239.70px;">0000</div><div class="ht" style="left:676.20px;top:239.70px">08 00 00 00 00 00 3e 41  00 01 03 06 02 42 ac 12</div><div class="ht" style="left:945.48px;top:239.70px">······&gt;A ·····B··</div><div class="ho" style="left:645.00px;top:250.77px;">0010</div><div class="ht" style="left:676.20px;top:250.77px">00 03 00 00 45 00 01 39  5a 0f 40 00 7f 06 03 df</div><div class="ht" style="left:945.48px;top:250.77px">····E··9 Z·@·····</div><div class="ho" style="left:645.00px;top:261.84px;">0020</div><div class="ht" style="left:676.20px;top:261.84px">ac 12 00 03 03 ed ec ce  20 fb 91 56 19 17 81 0f</div><div class="ht" style="left:945.48px;top:261.84px">········  ··V····</div><div class="ho" style="left:645.00px;top:272.91px;">0030</div><div class="ht" style="left:676.20px;top:272.91px">58 9d 76 ab 80 18 01 f5  9d fc 00 00 01 01 08 0a</div><div class="ht" style="left:945.48px;top:272.91px">X·v····· ········</div><div class="ho" style="left:645.00px;top:283.98px;">0040</div><div class="ht" style="left:676.20px;top:283.98px">4f 10 9e 4a 87 3f 60 44  16 03 03 00 80 02 00 00</div><div class="ht" style="left:945.48px;top:283.98px">O··J·?`D ········</div><div class="ho" style="left:645.00px;top:295.05px;">0050</div><div class="ht" style="left:676.20px;top:295.05px">7c 03 03 dc c8 ad 13 7f  cd 10 7a 32 02 ad bc f1</div><div class="ht" style="left:945.48px;top:295.05px">|······· ··z2····</div><div class="ho" style="left:645.00px;top:306.12px;">0060</div><div class="ht" style="left:676.20px;top:306.12px">5b b3 50 d5 87 e0 99 f0  18 e0 ab 3e 14 e5 df 04</div><div class="ht" style="left:945.48px;top:306.12px">[·P····· ···&gt;····</div><div class="ho" style="left:645.00px;top:317.19px;">0070</div><div class="ht" style="left:676.20px;top:317.19px">ce 2f 93 20 a2 b5 1e ea  49 56 46 c1 5a 80 5a 53</div><div class="ht" style="left:945.48px;top:317.19px">·/· ···· IVF·Z·ZS</div><div class="ho" style="left:645.00px;top:328.26px;">0080</div><div class="ht" style="left:676.20px;top:328.26px">f6 e2 0a 76 61 79 6a 1f  29 22 c5 96 ad 34 58 5d</div><div class="ht" style="left:945.48px;top:328.26px">···vayj· )&quot;···4X]</div><div class="ho" style="left:645.00px;top:339.33px;color:#e8e8e8">0090</div><div class="ht" style="left:676.20px;top:339.33px">57 cc 3e d9 13 02 00 00  34 00 2b 00 02 03 04 00</div><div class="ht" style="left:945.48px;top:339.33px">W·&gt;····· 4·+·····</div><div class="ho" style="left:645.00px;top:350.40px;color:#e8e8e8">00a0</div><div class="ht" style="left:676.20px;top:350.40px">33 00 24 00 1d 00 20 6e  71 84 54 d3 56 53 00 88</div><div class="ht" style="left:945.48px;top:350.40px">3·$··· n q·T·VS··</div><div class="ho" style="left:645.00px;top:361.47px;color:#e8e8e8">00b0</div><div class="ht" style="left:676.20px;top:361.47px">75 f0 9b ae a4 95 98 8f  4b 6b 51 62 76 e9 47 a4</div><div class="ht" style="left:945.48px;top:361.47px">u······· KkQbv·G·</div><div class="ho" style="left:645.00px;top:372.54px;color:#e8e8e8">00c0</div><div class="ht" style="left:676.20px;top:372.54px">ba b9 09 77 bb ad 73 00  29 00 02 00 00 14 03 03</div><div class="ht" style="left:945.48px;top:372.54px">···w··s· )·······</div><div class="ho" style="left:645.00px;top:383.61px;">00d0</div><div class="ht" style="left:676.20px;top:383.61px">00 01 01 17 03 03 00 75  19 16 d8 bd 83 51 a2 2e</div><div class="ht" style="left:945.48px;top:383.61px">·······u ·····Q·.</div><div class="ho" style="left:645.00px;top:394.68px;">00e0</div><div class="ht" style="left:676.20px;top:394.68px">0c c3 2a 68 29 91 7a 00  d3 9f 98 c2 25 b2 83 6a</div><div class="ht" style="left:945.48px;top:394.68px">··*h)·z· ····%··j</div><div class="ho" style="left:645.00px;top:405.75px;">00f0</div><div class="ht" style="left:676.20px;top:405.75px">59 05 ea 4e bb 71 14 e3  fc 87 fe fa 87 65 17 b8</div><div class="ht" style="left:945.48px;top:405.75px">Y··N·q·· ·····e··</div><div class="ho" style="left:645.00px;top:416.82px;">0100</div><div class="ht" style="left:676.20px;top:416.82px">84 03 ee 8d 95 d5 35 07  19 45 c1 54 81 24 26 27</div><div class="ht" style="left:945.48px;top:416.82px">······5· ·E·T·$&amp;&#x27;</div><div class="ho" style="left:645.00px;top:427.89px;">0110</div><div class="ht" style="left:676.20px;top:427.89px">7c b2 39 58 7b b5 a6 10  55 49 9b 93 1c e5 05 8f</div><div class="ht" style="left:945.48px;top:427.89px">|·9X{··· UI······</div><div class="ho" style="left:645.00px;top:438.96px;">0120</div><div class="ht" style="left:676.20px;top:438.96px">b8 ee d0 d8 e7 de 7e e9  90 93 22 4d ce 4a 6a 86</div><div class="ht" style="left:945.48px;top:438.96px">······~· ··&quot;M·Jj·</div><div class="ho" style="left:645.00px;top:450.03px;">0130</div><div class="ht" style="left:676.20px;top:450.03px">f9 e0 42 6c 93 45 d9 ad  89 4e d0 6b 2b 68 21 86</div><div class="ht" style="left:945.48px;top:450.03px">··Bl·E·· ·N·k+h!·</div><div class="ho" style="left:645.00px;top:461.10px;">0140</div><div class="ht" style="left:676.20px;top:461.10px">ac 16 0f 0e b7 20 49 4a  25 8e 5c 81 e4</div><div class="ht" style="left:945.48px;top:461.10px">····· IJ %·\··</div></body></html>
